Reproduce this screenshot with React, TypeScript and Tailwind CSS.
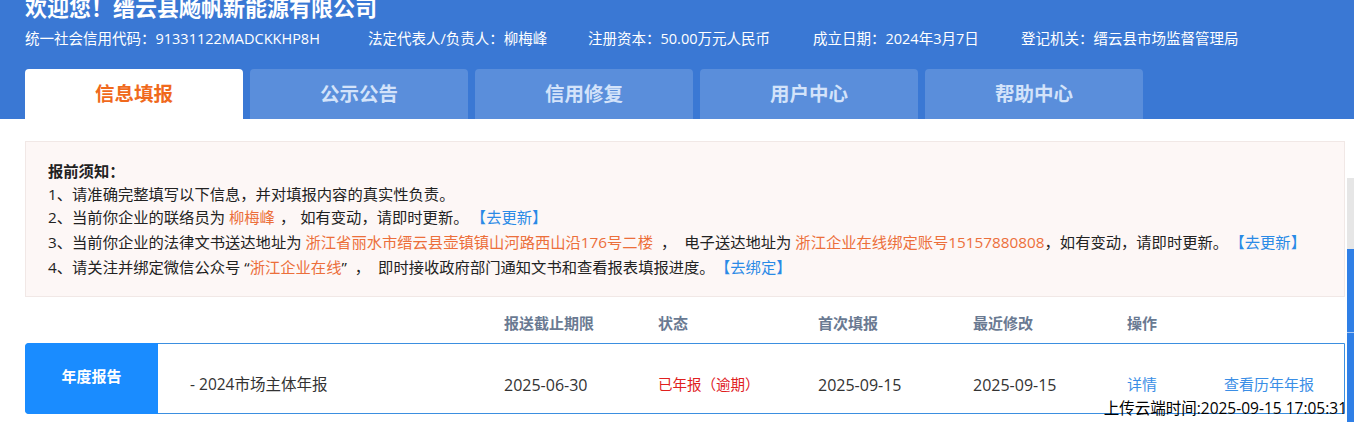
const tabs = ["信息填报", "公示公告", "信用修复", "用户中心", "帮助中心"];

const info = [
  { label: "统一社会信用代码：", value: "91331122MADCKKHP8H", w: "w-[343px]" },
  { label: "法定代表人/负责人：", value: "柳梅峰", w: "w-[220px]" },
  { label: "注册资本：", value: "50.00万元人民币", w: "w-[225px]" },
  { label: "成立日期：", value: "2024年3月7日", w: "w-[208px]" },
  { label: "登记机关：", value: "缙云县市场监督管理局", w: "" },
];

const Orange = ({ children }: { children: React.ReactNode }) => (
  <span className="text-[#ec6f3b]">{children}</span>
);
const Link = ({ children }: { children: React.ReactNode }) => (
  <span className="text-[#2a8ae6]">{children}</span>
);

export default function App() {
  return (
    <div
      className="relative h-[422px] w-[1354px] overflow-hidden bg-white"
      style={{ fontFamily: '"Open Sans","Noto Sans CJK SC",sans-serif' }}
    >
      {/* header */}
      <div className="bg-[#3a78d4] px-[25px]">
        <div className="-mt-[8px] h-[30px] text-[22px] font-bold leading-[30px] text-white">
          欢迎您！缙云县飏帆新能源有限公司
        </div>
        <div className="mt-[7px] flex h-[20px] items-center text-[14.5px] leading-[20px] text-white">
          {info.map((i) => (
            <div key={i.label} className={`shrink-0 ${i.w}`}>
              {i.label}
              {i.value}
            </div>
          ))}
        </div>
        <div className="mt-[20px] flex gap-[7px]">
          {tabs.map((t, idx) => (
            <div
              key={t}
              className={
                idx === 0
                  ? "flex h-[50px] w-[218px] items-center justify-center rounded-t-[4px] bg-white text-[19.5px] font-bold text-[#f0691c]"
                  : "flex h-[50px] w-[218px] items-center justify-center rounded-t-[4px] bg-[#5a8edb] text-[19.5px] font-bold text-[#d3e3fa]"
              }
            >
              {t}
            </div>
          ))}
        </div>
      </div>

      {/* notice */}
      <div className="mx-[25px] mt-[22px] w-[1320px] border border-[#f1e8e6] bg-[#fdf7f6] px-[22px] py-[17px] text-[15.3px] leading-[24px] text-[#222]">
        <div className="font-bold">报前须知：</div>
        <div className="-mt-[1px]">1、请准确完整填写以下信息，并对填报内容的真实性负责。</div>
        <div className="-mt-[1px]">
          2、当前你企业的联络员为 <Orange>柳梅峰</Orange>
          <span className="mx-[5px]">，</span>如有变动，请即时更新。
          <span className="ml-[10px]" />
          <Link>【去更新】</Link>
        </div>
        <div className="mt-[1px]">
          3、当前你企业的法律文书送达地址为 <Orange>浙江省丽水市缙云县壶镇镇山河路西山沿176号二楼</Orange>
          <span className="mx-[8px]">，</span>电子送达地址为 <Orange>浙江企业在线绑定账号15157880808</Orange>，如有变动，请即时更新。
          <span className="ml-[9px]" />
          <Link>【去更新】</Link>
        </div>
        <div className="mt-[1px]">
          4、请关注并绑定微信公众号<span className="ml-[4px]">“</span>
          <Orange>浙江企业在线</Orange>”<span className="mx-[8px]">，</span>即时接收政府部门通知文书和查看报表填报进度。
          <span className="ml-[8px]" />
          <Link>【去绑定】</Link>
        </div>
      </div>

      {/* table header */}
      <div className="mx-[25px] mt-[14px] flex h-[24px] items-center text-[15px] font-bold text-[#6a7a92]">
        <div className="w-[479px] shrink-0" />
        <div className="w-[154px] shrink-0">报送截止期限</div>
        <div className="w-[160px] shrink-0">状态</div>
        <div className="w-[155px] shrink-0">首次填报</div>
        <div className="w-[154px] shrink-0">最近修改</div>
        <div className="shrink-0">操作</div>
      </div>

      {/* row */}
      <div className="mx-[25px] mt-[8px] flex h-[71px] w-[1320px] rounded-l-[4px] border border-[#3b8fe0] text-[#333]">
        <div className="-my-px -ml-px flex w-[133px] shrink-0 items-center justify-center rounded-l-[4px] bg-[#1a8cff] pb-[4px] text-[15px] font-bold text-white">
          年度报告
        </div>
        <div className="flex flex-1 items-center pt-[12px]">
          <div className="w-[346px] shrink-0 pl-[32px] text-[15.5px]">- 2024市场主体年报</div>
          <div className="w-[154px] shrink-0 text-[16px]">2025-06-30</div>
          <div className="w-[160px] shrink-0 text-[14.5px] text-[#e0201e]">已年报（逾期）</div>
          <div className="w-[155px] shrink-0 text-[16px]">2025-09-15</div>
          <div className="w-[154px] shrink-0 text-[16px]">2025-09-15</div>
          <div className="w-[97px] shrink-0 text-[15px] text-[#3a8ee6]">详情</div>
          <div className="shrink-0 text-[15px] text-[#3a8ee6]">查看历年年报</div>
        </div>
      </div>

      {/* upload time overlay */}
      <div className="absolute right-[7px] top-[398px] text-[15.5px] leading-[20px] text-black">
        上传云端时间:2025-09-15 17:05:31
      </div>

      {/* side bar */}
      <div className="absolute right-0 top-[178px] flex h-[244px] w-[7px] flex-col">
        <div className="h-[71px] bg-[#e6e6e6]" />
        <div className="h-[83px] bg-[#2f7fe6]" />
        <div className="h-px bg-[#a9c8f2]" />
        <div className="flex-1 bg-[#2f7fe6]" />
      </div>
    </div>
  );
}
